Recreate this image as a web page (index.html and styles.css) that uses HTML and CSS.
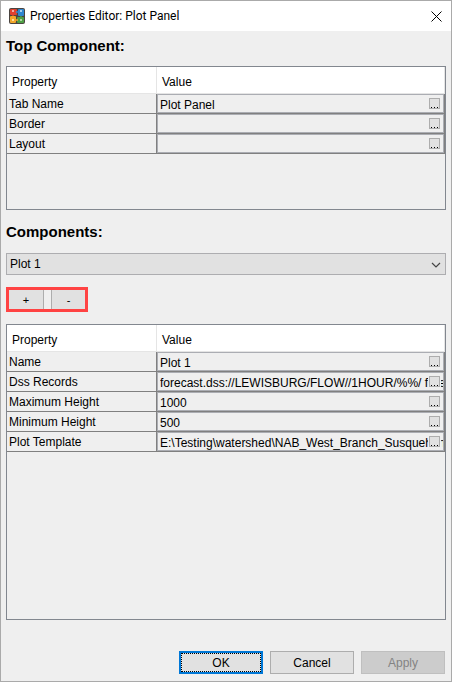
FILE: index.html
```html
<!DOCTYPE html>
<html lang="en">
<head>
<meta charset="utf-8">
<title>Properties Editor: Plot Panel</title>
<link rel="stylesheet" href="styles.css">
</head>
<body>
<div class="window">
  <header class="titlebar">
    <svg class="logo" width="16" height="16" viewBox="0 0 16 16" aria-hidden="true">
      <rect width="16" height="16" rx="2" fill="#4a4440"/>
      <rect x="1" y="1" width="7" height="6" rx="1" fill="#e0402f"/>
      <rect x="9" y="1" width="6" height="7" rx="1" fill="#2f86cf"/>
      <rect x="1" y="8" width="6" height="7" rx="1" fill="#f2a62a"/>
      <rect x="8" y="9" width="7" height="6" rx="1" fill="#4f9f45"/>
      <circle cx="4" cy="7" r="1" fill="#e0402f"/>
      <circle cx="8" cy="4" r="1" fill="#2f86cf"/>
      <circle cx="12" cy="9" r="1" fill="#4f9f45"/>
      <circle cx="8" cy="12" r="1" fill="#f2a62a"/>
      <circle cx="4" cy="3" r="1" fill="#f6d0cc"/>
      <circle cx="12" cy="3" r="1" fill="#cfe4f6"/>
      <circle cx="4" cy="12" r="1" fill="#fff0c4"/>
      <circle cx="12" cy="12" r="1" fill="#cfe8c4"/>
    </svg>
    <span class="title">Properties Editor: Plot Panel</span>
    <button class="close" aria-label="Close">
      <svg width="11" height="11" viewBox="0 0 11 11"><path d="M.5.5l10 10M10.5.5l-10 10" stroke="#000" stroke-width="1" fill="none"/></svg>
    </button>
  </header>
  <main class="content">
    <h2 class="heading">Top Component:</h2>
    <div class="panel panel-top">
      <table class="props">
        <thead><tr><th class="name-col">Property</th><th>Value</th></tr></thead>
        <tbody>
          <tr><td>Tab Name</td><td><div class="value"><input aria-label="Tab Name" readonly value="Plot Panel"><button class="more" aria-label="Edit Tab Name"><i></i><i></i><i></i></button></div></td></tr>
          <tr><td>Border</td><td><div class="value"><input aria-label="Border" readonly value=""><button class="more" aria-label="Edit Border"><i></i><i></i><i></i></button></div></td></tr>
          <tr><td>Layout</td><td><div class="value"><input aria-label="Layout" readonly value=""><button class="more" aria-label="Edit Layout"><i></i><i></i><i></i></button></div></td></tr>
        </tbody>
      </table>
    </div>
    <h2 class="heading heading-components"><label for="component">Components:</label></h2>
    <div class="combo">
      <select id="component"><option>Plot 1</option></select>
      <svg class="chevron" width="10" height="6" viewBox="0 0 10 6" aria-hidden="true"><path d="M1 1l4 4 4-4" stroke="#444" stroke-width="1.2" fill="none"/></svg>
    </div>
    <div class="tools">
      <button class="tool" aria-label="Add">+</button>
      <button class="tool" aria-label="Remove">-</button>
    </div>
    <div class="panel panel-components">
      <table class="props">
        <thead><tr><th class="name-col">Property</th><th>Value</th></tr></thead>
        <tbody>
          <tr><td>Name</td><td><div class="value"><input aria-label="Name" readonly value="Plot 1"><button class="more" aria-label="Edit Name"><i></i><i></i><i></i></button></div></td></tr>
          <tr><td>Dss Records</td><td><div class="value"><input aria-label="Dss Records" readonly value="forecast.dss://LEWISBURG/FLOW//1HOUR/%%/ forecast"><button class="more" aria-label="Edit Dss Records"><i></i><i></i><i></i></button></div></td></tr>
          <tr><td>Maximum Height</td><td><div class="value"><input aria-label="Maximum Height" readonly value="1000"><button class="more" aria-label="Edit Maximum Height"><i></i><i></i><i></i></button></div></td></tr>
          <tr><td>Minimum Height</td><td><div class="value"><input aria-label="Minimum Height" readonly value="500"><button class="more" aria-label="Edit Minimum Height"><i></i><i></i><i></i></button></div></td></tr>
          <tr><td>Plot Template</td><td><div class="value"><input aria-label="Plot Template" readonly value="E:\Testing\watershed\NAB_West_Branch_Susquehanna"><button class="more" aria-label="Edit Plot Template"><i></i><i></i><i></i></button></div></td></tr>
        </tbody>
      </table>
    </div>
    <footer class="actions">
      <button class="action primary">OK</button>
      <button class="action">Cancel</button>
      <button class="action" disabled>Apply</button>
    </footer>
  </main>
</div>
</body>
</html>
```
FILE: styles.css
```css
* { box-sizing: border-box; }
body {
  margin: 0;
  font: 12px/16px "Liberation Sans", Arial, sans-serif;
  color: #000;
}
button, input, select { font: inherit; color: inherit; margin: 0; padding: 0; border-radius: 0; }
.window {
  min-height: 100vh;
  display: flex;
  flex-direction: column;
  border: 1px solid #aaa;
  background: #efefef;
}
.titlebar {
  height: 30px;
  display: flex;
  align-items: center;
  gap: 5px;
  padding: 0 9px 0 8px;
  background: #fff;
}
.title { flex: 1; font: 12px/16px Roboto, sans-serif; }
.close { display: flex; border: 0; background: none; }
.content {
  flex: 1;
  display: flex;
  flex-direction: column;
  padding: 5px 5px 7px;
}
.heading { margin: 0 0 10px; font-size: 15px; line-height: 20px; font-weight: bold; }
.heading-components { margin-top: 12px; margin-bottom: 11px; }
.panel { border: 1px solid #82878f; overflow: hidden; }
.panel-top { height: 144px; }
.panel-components { flex: 1; }
.props {
  width: 100%;
  table-layout: fixed;
  border-collapse: separate;
  border-spacing: 0;
}
.props th {
  height: 27px;
  padding: 3px 5px 0;
  text-align: left;
  font-weight: normal;
  background: #fff;
  border-right: 1px solid #e5e5e5;
  border-bottom: 1px solid #e5e5e5;
}
.name-col { width: 150px; }
.props td {
  height: 20px;
  padding: 0 2px;
  border-right: 1px solid #808080;
  border-bottom: 1px solid #808080;
}
.props td + td { padding: 0; }
.value { position: relative; height: 19px; border: 1px solid #abadb3; }
.value input {
  display: block;
  width: 100%;
  height: 17px;
  padding: 2px 0 0 2px;
  border: 0;
  outline: 0;
  background: none;
}
.more {
  position: absolute;
  top: 3px;
  right: 3px;
  width: 11px;
  height: 11px;
  display: flex;
  align-items: flex-end;
  justify-content: flex-end;
  gap: 1px;
  border: 1px solid #adadad;
  background: #e1e1e1;
  box-shadow: 0 0 0 1px #efefef;
}
.more i { width: 1px; height: 1px; margin-right: 1px; background: #000; }
.combo { position: relative; height: 22px; }
.combo select {
  width: 100%;
  height: 22px;
  padding: 0 3px;
  appearance: none;
  border: 1px solid #adadb0;
  background: #e1e1e1;
}
.chevron { position: absolute; right: 5px; top: 9px; }
.tools {
  align-self: flex-start;
  display: flex;
  gap: 7px;
  margin: 12px 0;
  border: 3px solid #ff4343;
}
.tool { width: 35px; height: 19px; border: 0; border-right: 1px solid #adadad; background: #e1e1e1; font-size: 11px; }
.tool + .tool { width: 34px; border-right: 0; border-left: 1px solid #adadad; }
.actions { display: flex; justify-content: flex-end; gap: 7px; margin: 31px 1px 0 0; }
.action { width: 84px; height: 23px; border: 1px solid #adadad; background: #e1e1e1; }
.primary { border: 2px solid #0078d7; outline: 1px dotted #000; outline-offset: -3px; }
.action:disabled { border-color: #bfbfbf; background: #ccc; color: #838383; }
```
